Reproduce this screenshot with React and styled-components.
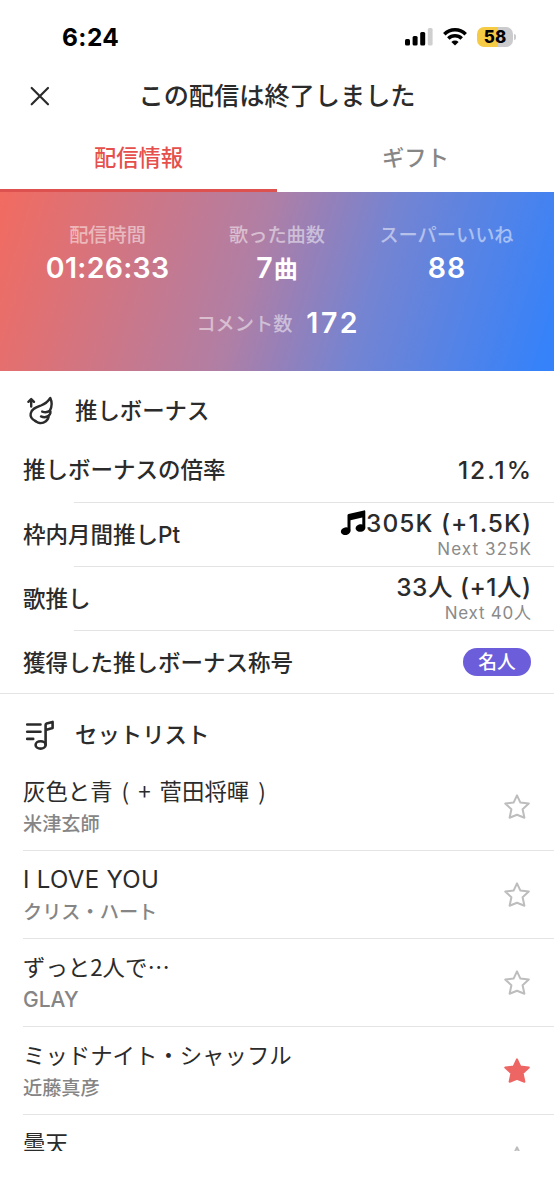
import React from 'react';
import styled, { createGlobalStyle } from 'styled-components';

const GlobalStyle = createGlobalStyle`
  * {
    box-sizing: border-box;
  }

  body {
    margin: 0;
    background: #fff;
    color: #2b2b2b;
    font-family: 'Noto Sans CJK JP', sans-serif;
    font-weight: 500;
  }
`;

const Screen = styled.div`
  display: flex;
  flex-direction: column;
  height: 1151px;
  overflow: hidden;
`;

const StatusBar = styled.div`
  display: flex;
  flex: none;
  align-items: center;
  height: 74px;
  padding: 0 38px 0 62px;
`;

const Clock = styled.span`
  margin: 0 auto 0 0;
  color: #000;
  font: 700 24.5px/28px Inter, sans-serif;
  letter-spacing: 0.4px;
`;

const StatusIcon = styled.svg`
  flex: none;
  margin-left: ${({ $gap }) => $gap || 0}px;
`;

const Battery = styled.span`
  width: 36px;
  height: 20px;
  margin-left: 10px;
  border-radius: 7px;
  background: linear-gradient(90deg, #f5cb45 58%, #cbcbcd 58%);
  color: #000;
  font: 800 17px/20px Inter, sans-serif;
  text-align: center;
`;

const BatteryTip = styled.span`
  width: 2px;
  height: 6px;
  margin-left: 1px;
  border-radius: 0 2px 2px 0;
  background: #cbcbcd;
`;

const Header = styled.header`
  display: grid;
  flex: none;
  grid-template-columns: 80px 1fr 80px;
  align-items: center;
  height: 44px;
`;

const CloseButton = styled.button`
  display: flex;
  padding: 0 0 0 30px;
  border: 0;
  background: none;
`;

const Title = styled.h1`
  margin: 0;
  font-size: 25.2px;
  font-weight: 500;
  line-height: 40px;
  padding-bottom: 4px;
  text-align: center;
`;

const Tabs = styled.nav`
  display: grid;
  flex: none;
  grid-template-columns: 1fr 1fr;
  height: 74px;
`;

const Tab = styled.div`
  height: 74px;
  border-bottom: 3px solid ${({ $active }) => ($active ? '#dd524e' : 'transparent')};
  color: ${({ $active }) => ($active ? '#e5504d' : '#868686')};
  font-size: 22.3px;
  line-height: 76px;
  text-align: center;
`;

const Summary = styled.section`
  flex: none;
  height: 179px;
  padding-top: 28px;
  background: linear-gradient(107deg, #f26b60 0%, #b07fa5 45%, #9680b8 54%, #7484d2 66%, #3582fa 98%);
`;

const Stats = styled.div`
  display: grid;
  grid-template-columns: 169px 1fr 169px;
  padding: 0 23px;
`;

const Stat = styled.div`
  display: flex;
  flex-direction: column;
  align-items: center;
`;

const StatLabel = styled.span`
  color: rgba(255, 255, 255, 0.5);
  font-size: 19.2px;
  line-height: 28px;
  white-space: nowrap;
`;

const StatValue = styled.span`
  color: #fff;
  font-family: Inter, 'Noto Sans CJK JP', sans-serif;
  font-size: 28.5px;
  font-weight: 600;
  line-height: 40px;
  letter-spacing: ${({ $spacing }) => $spacing || 0}px;
  margin-right: ${({ $spacing }) => -($spacing || 0)}px;
`;

const Unit = styled.span`
  font-size: 24px;
`;

const Comments = styled.div`
  display: flex;
  justify-content: center;
  align-items: center;
  gap: 14px;
  margin-top: 13px;
`;

const SectionHead = styled.div`
  display: flex;
  flex: none;
  align-items: center;
  gap: 19px;
  height: ${({ $height }) => $height}px;
  padding: 13px 0 0 24px;
`;

const SectionTitle = styled.h2`
  margin: -4px 0 0;
  font-size: 22.4px;
  font-weight: 500;
  line-height: 32px;
`;

const BonusRow = styled.div`
  display: flex;
  flex: none;
  justify-content: space-between;
  align-items: center;
  height: ${({ $height }) => $height || 63}px;
  padding: 0 23px;
`;

const BonusLabel = styled.span`
  margin-top: 1px;
  font-family: Inter, 'Noto Sans CJK JP', sans-serif;
  font-size: 22.5px;
  line-height: 32px;
`;

const Divider = styled.hr`
  flex: none;
  width: auto;
  height: 1px;
  margin: 0 0 0 ${({ $inset }) => $inset || 0}px;
  border: 0;
  background: #e4e4e4;
`;

const Values = styled.div`
  display: flex;
  flex-direction: column;
  align-items: flex-end;
  padding-top: ${({ $offset }) => $offset || 0}px;
  font-family: Inter, 'Noto Sans CJK JP', sans-serif;
`;

const Value = styled.div`
  display: flex;
  align-items: center;
  font-size: 24.5px;
  line-height: 28px;
  letter-spacing: ${({ $spacing }) => $spacing || 0}px;
  margin-right: ${({ $spacing }) => -($spacing || 0)}px;
  white-space: pre;
`;

const Next = styled.div`
  color: #8a8a8a;
  font-size: 17px;
  font-weight: 400;
  line-height: 25px;
  letter-spacing: ${({ $spacing }) => $spacing || 0}px;
  margin-right: ${({ $spacing }) => -($spacing || 0)}px;
`;

const Badge = styled.span`
  width: 68px;
  height: 28px;
  border-radius: 14px;
  background: #6c5ddb;
  color: #fff;
  font-size: 18.8px;
  line-height: 26px;
  text-align: center;
`;

const Song = styled.div`
  display: flex;
  flex: none;
  justify-content: space-between;
  align-items: center;
  height: 87px;
  padding: 0 23px;
`;

const SongTitle = styled.div`
  height: 32px;
  font-family: ${({ $latin }) => ($latin ? 'Inter, sans-serif' : 'inherit')};
  font-size: ${({ $latin }) => ($latin ? 24 : 22.4)}px;
  font-weight: 400;
  line-height: ${({ $latin }) => ($latin ? 36 : 32)}px;
  letter-spacing: ${({ $latin }) => ($latin ? 0.3 : 0)}px;
  word-spacing: ${({ $latin }) => ($latin ? 0 : 4)}px;
`;

const Artist = styled.div`
  height: 32px;
  margin-top: 1px;
  color: #858585;
  font-family: ${({ $latin }) => ($latin ? 'Inter, sans-serif' : 'inherit')};
  font-size: ${({ $latin }) => ($latin ? 21 : 19.2)}px;
  line-height: ${({ $latin }) => ($latin ? 34 : 32)}px;
`;

const songs = [
  { title: '灰色と青 ( + 菅田将暉 )', artist: '米津玄師' },
  { title: 'I LOVE YOU', artist: 'クリス・ハート' },
  { title: 'ずっと2人で…', artist: 'GLAY' },
  { title: 'ミッドナイト・シャッフル', artist: '近藤真彦', starred: true },
  { title: '曇天', artist: '' },
];

const isLatin = (text) => /^[A-Z ]+$/.test(text);

function SignalIcon() {
  return (
    <StatusIcon width="28" height="18" viewBox="0 0 28 18">
      <rect x="0" y="11" width="5" height="6.5" rx="1.5" />
      <rect x="7.6" y="8" width="5" height="9.5" rx="1.5" />
      <rect x="15.2" y="4" width="5" height="13.5" rx="1.5" />
      <rect x="22.8" y="0" width="4.8" height="17.5" rx="1.5" fill="#cfcfcf" />
    </StatusIcon>
  );
}

function WifiIcon() {
  return (
    <StatusIcon $gap={10} width="24" height="18" viewBox="0 0 24 18">
      <g fill="none" stroke="#000" strokeWidth="3.5">
        <path d="M1.3 6.2a15.2 15.2 0 0 1 21.4 0" />
        <path d="M5.3 10.6a9.5 9.5 0 0 1 13.4 0" />
      </g>
      <path d="M12 17.6 8.4 14a5.1 5.1 0 0 1 7.2 0Z" />
    </StatusIcon>
  );
}

function WingIcon() {
  return (
    <svg width="32" height="32" viewBox="0 0 32 32" fill="none" stroke="#2b2b2b" strokeWidth="2.4" strokeLinecap="round" strokeLinejoin="round">
      <path d="M7.2 11.5V4.5M4.4 6.8 7.2 4 10 6.8" />
      <path d="M11.5 26.1C8.3 24.5 6 21.800 6.700 18.500C7.800 13.500 12.500 12.200 17 10.500C21.500 8.800 24 6.500 26.300 3C28.200 7 27.900 12 25.800 15.800" />
      <path d="M18.200 16.600C21 17.500 24 17.200 25.800 15.800C27.200 16.800 26.500 19 24.600 20.800C24.800 25 20 28.600 15.800 28C13.500 27.700 12.500 26.500 11.500 26.100" />
      <path d="M17 21.400C19.500 22.500 22.500 22.300 24.600 20.800" />
    </svg>
  );
}

function SetlistIcon() {
  return (
    <svg width="32" height="32" viewBox="0 0 32 32" fill="none" stroke="#2b2b2b" strokeWidth="2.6" strokeLinecap="round" strokeLinejoin="round">
      <path d="M3.2 5.5H16.5M3.2 12.7H16.5M3.2 19.9H9.2" />
      <ellipse cx="16.6" cy="25.900" rx="5" ry="3.700" />
      <path d="M21.600 25.700V5.900Q21.600 4.900 22.600 4.600L28.600 2.900V9L21.600 11.100" />
    </svg>
  );
}

function NotesIcon() {
  return (
    <svg width="26" height="26" viewBox="0 0 26 26">
      <path d="M7.5 5.2Q7.5 4.2 8.5 4L24 .4Q25.3.1 25.3 1.5V17H22.3V7.5L10.5 10.3V20.5H7.5Z" />
      <ellipse cx="5.7" cy="21.2" rx="4.9" ry="3.8" transform="rotate(-12 5.7 21.2)" />
      <ellipse cx="20.5" cy="18" rx="4.9" ry="3.8" transform="rotate(-12 20.5 18)" />
    </svg>
  );
}

function Star({ filled }) {
  const color = filled ? '#ed6664' : '#bdbdbd';

  return (
    <svg width="28" height="28" viewBox="0 0 28 28">
      <path
        d="M14 2.3 17.4 9.6 25.8 10.6 19.6 16.2 21.4 24.7 14 21.7 6.6 24.7 8.4 16.2 2.2 10.6 10.6 9.6Z"
        fill={filled ? color : 'none'}
        stroke={color}
        strokeWidth="2"
        strokeLinejoin="round"
      />
    </svg>
  );
}

function App() {
  return (
    <>
      <GlobalStyle />
      <Screen>
        <StatusBar>
          <Clock>6:24</Clock>
          <SignalIcon />
          <WifiIcon />
          <Battery>58</Battery>
          <BatteryTip />
        </StatusBar>
        <Header>
          <CloseButton aria-label="閉じる">
            <svg width="20" height="20" viewBox="0 0 20 20" stroke="#2b2b2b" strokeWidth="2.2" strokeLinecap="round">
              <path d="M1.7 2 18 18.3M18 2 1.7 18.3" />
            </svg>
          </CloseButton>
          <Title>この配信は終了しました</Title>
        </Header>
        <Tabs>
          <Tab $active>配信情報</Tab>
          <Tab>ギフト</Tab>
        </Tabs>
        <Summary>
          <Stats>
            <Stat>
              <StatLabel>配信時間</StatLabel>
              <StatValue $spacing={0.3}>01:26:33</StatValue>
            </Stat>
            <Stat>
              <StatLabel>歌った曲数</StatLabel>
              <StatValue $spacing={1}>
                7<Unit>曲</Unit>
              </StatValue>
            </Stat>
            <Stat>
              <StatLabel>スーパーいいね</StatLabel>
              <StatValue $spacing={1}>88</StatValue>
            </Stat>
          </Stats>
          <Comments>
            <StatLabel>コメント数</StatLabel>
            <StatValue $spacing={2.5}>172</StatValue>
          </Comments>
        </Summary>

        <SectionHead $height={66}>
          <WingIcon />
          <SectionTitle>推しボーナス</SectionTitle>
        </SectionHead>
        <BonusRow $height={65}>
          <BonusLabel>推しボーナスの倍率</BonusLabel>
          <Values>
            <Value $spacing={2}>12.1%</Value>
          </Values>
        </BonusRow>
        <Divider $inset={74} />
        <BonusRow>
          <BonusLabel>枠内月間推しPt</BonusLabel>
          <Values $offset={2}>
            <Value $spacing={1.05}>
              <NotesIcon />
              305K (+1.5K)
            </Value>
            <Next $spacing={1.1}>Next 325K</Next>
          </Values>
        </BonusRow>
        <Divider $inset={74} />
        <BonusRow>
          <BonusLabel>歌推し</BonusLabel>
          <Values $offset={2}>
            <Value $spacing={0.5}>33人 (+1人)</Value>
            <Next $spacing={0.75}>Next 40人</Next>
          </Values>
        </BonusRow>
        <Divider $inset={74} />
        <BonusRow $height={62}>
          <BonusLabel>獲得した推しボーナス称号</BonusLabel>
          <Badge>名人</Badge>
        </BonusRow>
        <Divider />

        <SectionHead $height={69}>
          <SetlistIcon />
          <SectionTitle>セットリスト</SectionTitle>
        </SectionHead>
        {songs.map(({ title, artist, starred }, i) => (
          <React.Fragment key={title}>
            {i > 0 && <Divider $inset={23} />}
            <Song>
              <div>
                <SongTitle $latin={isLatin(title)}>{title}</SongTitle>
                <Artist $latin={isLatin(artist)}>{artist}</Artist>
              </div>
              <Star filled={starred} />
            </Song>
          </React.Fragment>
        ))}
      </Screen>
    </>
  );
}

export default App;
